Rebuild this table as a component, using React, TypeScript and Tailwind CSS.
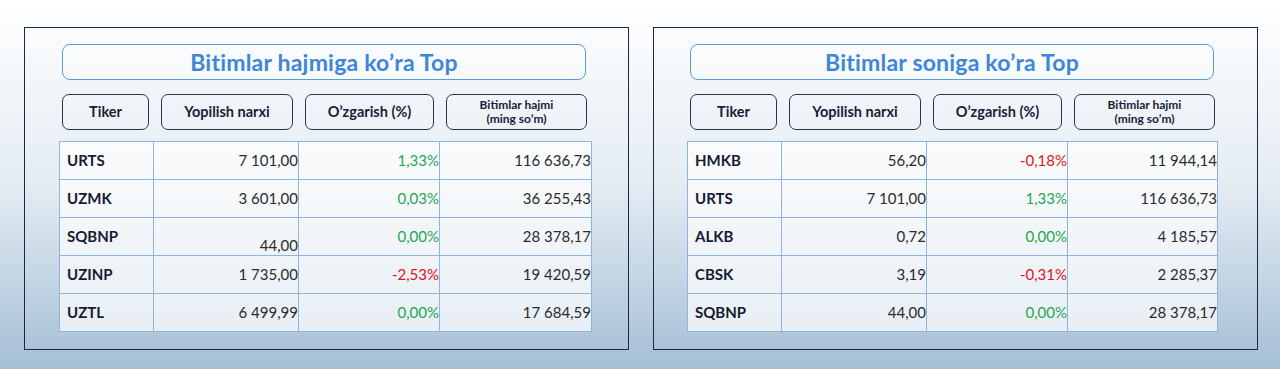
type Row = {
    ticker: string
    price: string
    change: string
    volume: string
    up: boolean
    bottomPrice?: boolean
}

const volumeRows: Row[] = [
    { ticker: 'URTS', price: '7 101,00', change: '1,33%', volume: '116 636,73', up: true },
    { ticker: 'UZMK', price: '3 601,00', change: '0,03%', volume: '36 255,43', up: true },
    { ticker: 'SQBNP', price: '44,00', change: '0,00%', volume: '28 378,17', up: true, bottomPrice: true },
    { ticker: 'UZINP', price: '1 735,00', change: '-2,53%', volume: '19 420,59', up: false },
    { ticker: 'UZTL', price: '6 499,99', change: '0,00%', volume: '17 684,59', up: true },
]

const countRows: Row[] = [
    { ticker: 'HMKB', price: '56,20', change: '-0,18%', volume: '11 944,14', up: false },
    { ticker: 'URTS', price: '7 101,00', change: '1,33%', volume: '116 636,73', up: true },
    { ticker: 'ALKB', price: '0,72', change: '0,00%', volume: '4 185,57', up: true },
    { ticker: 'CBSK', price: '3,19', change: '-0,31%', volume: '2 285,37', up: false },
    { ticker: 'SQBNP', price: '44,00', change: '0,00%', volume: '28 378,17', up: true },
]

function TopPanel({ title, rows, right }: { title: string; rows: Row[]; right?: boolean }) {
    return (
        <div className="w-[605px] h-[323px] border-[1.5px] border-[#1e2640] flex flex-col">
            {/* Title */}
            <div className={`${right ? 'ml-[36px]' : 'ml-[37px]'} mt-[16px] w-[524px] h-[36px] rounded-lg border-[1.5px] border-[#5b9bd5] bg-white/30 flex items-center justify-center`}>
                <span className="text-[23px] font-bold text-[#3d86d9] tracking-[0.2px]">{title}</span>
            </div>

            {/* Column headers */}
            <div className={`${right ? 'ml-[36px]' : 'ml-[37px]'} mt-[14px] flex gap-3 text-[#1a2038] font-bold`}>
                <div className="w-[87px] h-[36px] rounded-[7px] border-[1.5px] border-[#2a3350] flex items-center justify-center text-[14.5px]">Tiker</div>
                <div className="w-[132px] h-[36px] rounded-[7px] border-[1.5px] border-[#2a3350] flex items-center justify-center text-[14.5px]">Yopilish narxi</div>
                <div className="w-[129px] h-[36px] rounded-[7px] border-[1.5px] border-[#2a3350] flex items-center justify-center text-[14.5px]">O’zgarish (%)</div>
                <div className="w-[141px] h-[36px] rounded-[7px] border-[1.5px] border-[#2a3350] flex flex-col items-center justify-center text-[12px] leading-[14px]">
                    <span>Bitimlar hajmi</span>
                    <span>(ming so’m)</span>
                </div>
            </div>

            {/* Table */}
            <table className={`${right ? 'ml-[33px] w-[531px]' : 'ml-[34px] w-[533px]'} mt-[11px] table-fixed border-collapse bg-white/70`}>
                <colgroup>
                    <col className="w-[94px]" />
                    <col className="w-[145px]" />
                    <col className="w-[141px]" />
                    <col />
                </colgroup>
                <tbody>
                    {rows.map((r) => (
                        <tr key={r.ticker} className="h-[38px]">
                            <td className="border border-[#8fb4de] pl-[7px] text-[15px] font-bold text-[#161b33]">{r.ticker}</td>
                            <td className={`border border-[#8fb4de] pr-0 text-right text-[15px] text-[#2b2b2b] ${r.bottomPrice ? 'align-bottom leading-[20px]' : ''}`}>{r.price}</td>
                            <td className={`border border-[#8fb4de] pr-0 text-right text-[15px] ${r.up ? 'text-[#1fa650]' : 'text-[#e1121c]'}`}>{r.change}</td>
                            <td className="border border-[#8fb4de] pr-0 text-right text-[15px] text-[#2b2b2b]">{r.volume}</td>
                        </tr>
                    ))}
                </tbody>
            </table>
        </div>
    )
}

export default function App() {
    return (
        <div className="w-[1280px] h-[369px] bg-gradient-to-b from-white via-[#e4ecf3] to-[#a5bfd5] flex gap-6 pl-6 pt-[27px] font-['Lato','Open_Sans',sans-serif]">
            <TopPanel title="Bitimlar hajmiga ko’ra Top" rows={volumeRows} />
            <TopPanel title="Bitimlar soniga ko’ra Top" rows={countRows} right />
        </div>
    )
}
